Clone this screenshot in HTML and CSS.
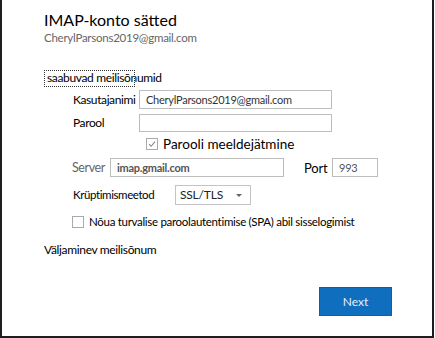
FILE: index.html
```html
<!DOCTYPE html>
<html lang="et">
<head>
<meta charset="utf-8">
<link rel="stylesheet" href="styles.css">
</head>
<body>
<div class="frame">
  <div class="content">
    <h1 class="title">IMAP-konto sätted</h1>
    <div class="account">CherylParsons2019@gmail.com</div>

    <div class="section-head"><span class="focus"></span>saabuvad meilisõnumid</div>

    <div class="row row-user">
      <label class="lbl lbl-wide">Kasutajanimi</label>
      <div class="field field-long">CherylParsons2019@gmail.com</div>
    </div>
    <div class="row row-pass">
      <label class="lbl lbl-wide">Parool</label>
      <div class="field field-long"></div>
    </div>
    <div class="row row-remember">
      <span class="check checked"><svg viewBox="0 0 12 12" width="12" height="12"><path d="M2.5 6.2 L5 8.7 L9.6 3.2" fill="none" stroke="#8a8a8a" stroke-width="1.3"/></svg></span>
      <span class="remember-text">Parooli meeldejätmine</span>
    </div>
    <div class="row row-server">
      <label class="lbl lbl-server">Server</label>
      <div class="field field-server">imap.gmail.com</div>
      <label class="lbl lbl-port">Port</label>
      <div class="field field-port">993</div>
    </div>
    <div class="row row-enc">
      <label class="lbl lbl-enc">Krüptimismeetod</label>
      <div class="select">SSL/TLS<span class="caret"></span></div>
    </div>
    <div class="row row-spa">
      <span class="check"></span>
      <span class="spa-text">Nõua turvalise paroolautentimise (SPA) abil sisselogimist</span>
    </div>

    <div class="section-out">Väljaminev meilisõnum</div>

    <div class="actions">
      <button class="next">Next</button>
    </div>
  </div>
</div>
</body>
</html>
```

FILE: styles.css
```css
* { box-sizing: border-box; }
html, body { margin: 0; padding: 0; background: #fff; }
body { font-family: Lato, "Liberation Sans", sans-serif; color: #000; }

.frame {
  width: 434px;
  height: 338px;
  border-left: 2px solid #1e1e1e;
  border-right: 2px solid #1e1e1e;
  border-bottom: 2px solid #1e1e1e;
  background: #fff;
}
.content { padding: 10px 0 0 42px; }

.title {
  margin: 0;
  font-size: 16px;
  font-weight: normal;
  line-height: 20px;
  height: 20px;
  color: #000;
}
.account {
  font-size: 11.5px;
  letter-spacing: -0.25px;
  line-height: 16px;
  height: 16px;
  color: #666;
}

.section-head {
  position: relative;
  margin-top: 24px;
  padding-left: 3px;
  font-size: 12px;
  letter-spacing: -0.35px;
  line-height: 16px;
  height: 16px;
}
.focus {
  position: absolute;
  left: 0;
  top: 0;
  width: 91px;
  height: 17px;
  border: 1px dotted #333;
}

.row { display: flex; align-items: center; }
.lbl { font-size: 12px; letter-spacing: -0.4px; line-height: 16px; }
.lbl-wide { width: 66px; margin-left: 29px; }
.field {
  height: 100%;
  border: 1px solid #bdbdbd;
  font-size: 11px;
  letter-spacing: -0.25px;
  line-height: 17px;
  padding-left: 6px;
  color: #333;
}
.field-long { width: 193px; }
.row-user { margin-top: 4px; height: 19px; }
.row-pass { margin-top: 5px; height: 18px; }

.check {
  flex: none;
  width: 12px;
  height: 12px;
  border: 1px solid #aaa;
  background: #fff;
  display: inline-flex;
  align-items: center;
  justify-content: center;
}
.check svg { display: block; }
.row-remember { margin-top: 6px; height: 12px; padding-left: 102px; }
.remember-text { margin-left: 5px; font-size: 13.5px; line-height: 16px; }

.row-server { margin-top: 8px; height: 19px; }
.lbl-server { margin-left: 28px; width: 38px; color: #666; font-size: 12.5px; }
.field-server { width: 174px; font-weight: bold; color: #555; }
.lbl-port { margin-left: 20px; width: 28px; font-size: 13px; letter-spacing: -0.2px; }
.field-port { width: 46px; color: #555; }

.row-enc { margin-top: 8px; height: 20px; }
.lbl-enc { margin-left: 29px; width: 102px; font-size: 11.5px; }
.select {
  position: relative;
  width: 76px;
  height: 20px;
  border: 1px solid #c4c4c4;
  font-size: 12px;
  letter-spacing: -0.2px;
  line-height: 18px;
  padding-left: 4px;
  color: #222;
}
.caret {
  position: absolute;
  right: 8px;
  top: 8px;
  width: 0;
  height: 0;
  border-left: 3px solid transparent;
  border-right: 3px solid transparent;
  border-top: 3px solid #666;
}

.row-spa { margin-top: 11px; height: 12px; padding-left: 28px; }
.spa-text { margin-left: 5px; font-size: 11.5px; letter-spacing: -0.3px; line-height: 16px; white-space: nowrap; }

.section-out {
  margin-top: 14px;
  font-size: 12px;
  letter-spacing: -0.35px;
  line-height: 16px;
  height: 16px;
}

.actions { display: flex; justify-content: flex-end; padding-right: 40px; margin-top: 29px; }
.next {
  width: 73px;
  height: 29px;
  border: 1px solid #0e5fa8;
  background: #106ebe;
  color: #e6eef7;
  font-family: Lato, "Liberation Sans", sans-serif;
  font-size: 12px;
  padding: 0;
}
```
